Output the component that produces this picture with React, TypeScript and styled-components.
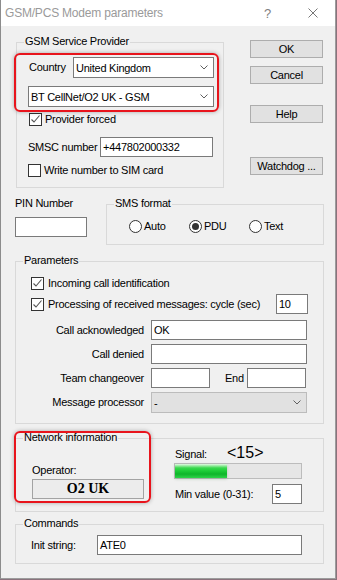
import React from 'react';
import styled, { createGlobalStyle } from 'styled-components';

const GlobalStyle = createGlobalStyle`
  * { box-sizing: border-box; }
  html, body { margin: 0; padding: 0; }
  body {
    background: #8a727c;
    font-family: "Liberation Sans", Arial, sans-serif;
    font-size: 11px;
    letter-spacing: -0.25px;
    color: #000;
  }
`;

const Window = styled.div`
  width: 336px;
  height: 579px;
  background: #f0f0f0;
  border-left: 1px solid #8c8c8c;
  border-right: 1px solid #9c9c9c;
  border-bottom: 1px solid #9c9c9c;
  display: flex;
  flex-direction: column;
`;

const TitleBar = styled.div`
  height: 26px;
  flex: none;
  background: #fff;
  display: flex;
  align-items: center;
  padding-left: 4px;
`;

const Title = styled.div`
  flex: 1;
  font-size: 12px;
  letter-spacing: -0.2px;
  color: #9a9a9a;
`;

const TitleHelp = styled.div`
  font-size: 13px;
  color: #808080;
  margin-right: 37px;
`;

const TitleClose = styled.svg`
  margin-right: 17px;
  flex: none;
`;

const Body = styled.div`
  position: relative;
  flex: 1;
  padding-left: 14px;
  display: flex;
  flex-direction: column;
  align-items: flex-start;
`;

const TopRow = styled.div`
  display: flex;
  align-items: flex-start;
  margin-top: 14px;
`;

const MidRow = styled.div`
  display: flex;
  align-items: flex-start;
  margin-top: 16px;
`;

const Group = styled.div<{ $w: number; $h: number; $ml?: number; $mt?: number; $pad: string; $dir?: string }>`
  position: relative;
  flex: none;
  width: ${p => p.$w}px;
  height: ${p => p.$h}px;
  margin-left: ${p => p.$ml ?? 0}px;
  margin-top: ${p => p.$mt ?? 0}px;
  padding: ${p => p.$pad};
  border: 1px solid #d9d9d9;
  display: flex;
  flex-direction: ${p => p.$dir ?? 'column'};
  align-items: flex-start;
`;

const Legend = styled.span`
  position: absolute;
  top: -8px;
  left: 7px;
  padding: 0 1px;
  line-height: 13px;
  background: #f0f0f0;
  white-space: nowrap;
`;

const Row = styled.div<{ $mt?: number; $ml?: number; $h?: number; $gap?: number }>`
  display: flex;
  align-items: center;
  margin-top: ${p => p.$mt ?? 0}px;
  margin-left: ${p => p.$ml ?? 0}px;
  height: ${p => (p.$h ? `${p.$h}px` : 'auto')};
  gap: ${p => p.$gap ?? 0}px;
  align-self: stretch;
`;

const Label = styled.span<{ $w?: number; $ml?: number; $right?: boolean }>`
  flex: none;
  width: ${p => (p.$w ? `${p.$w}px` : 'auto')};
  margin-left: ${p => p.$ml ?? 0}px;
  text-align: ${p => (p.$right ? 'right' : 'left')};
  line-height: 13px;
  white-space: nowrap;
`;

const TextBox = styled.div<{ $w: number; $ml?: number | 'auto'; $mt?: number }>`
  flex: none;
  width: ${p => p.$w}px;
  height: 20px;
  margin-left: ${p => (p.$ml === 'auto' ? 'auto' : `${p.$ml ?? 0}px`)};
  margin-top: ${p => p.$mt ?? 0}px;
  border: 1px solid #7a7a7a;
  background: #fff;
  padding-left: 2px;
  display: flex;
  align-items: center;
  white-space: nowrap;
`;

const Combo = styled.div<{ $w: number; $h?: number; $ml?: number; $mt?: number; $disabled?: boolean }>`
  flex: none;
  width: ${p => p.$w}px;
  height: ${p => p.$h ?? 21}px;
  margin-left: ${p => p.$ml ?? 0}px;
  margin-top: ${p => p.$mt ?? 0}px;
  border: 1px solid ${p => (p.$disabled ? '#bcbcbc' : '#7a7a7a')};
  background: ${p => (p.$disabled ? '#e1e1e1' : '#fff')};
  padding: 0 5px 0 2px;
  display: flex;
  align-items: center;
  justify-content: space-between;
  white-space: nowrap;
`;

const Chevron = () => (
  <svg width="8" height="5" viewBox="0 0 8 5">
    <path d="M0.5 0.5 L4 4 L7.5 0.5" fill="none" stroke="#606060" strokeWidth="1" />
  </svg>
);

const Box = styled.span`
  flex: none;
  width: 13px;
  height: 13px;
  border: 1px solid #333;
  background: #fff;
  display: flex;
  align-items: center;
  justify-content: center;
`;

const Check = ({ on }: { on?: boolean }) => (
  <Box>
    {on && (
      <svg width="11" height="11" viewBox="0 0 11 11">
        <polyline points="1.5,5.5 4,8 9.5,1.5" fill="none" stroke="#555" strokeWidth="1.1" />
      </svg>
    )}
  </Box>
);

const RadioItem = styled.div`
  width: 60px;
  height: 13px;
  display: flex;
  align-items: center;
  gap: 2px;
  flex: none;
`;

const RadioCircle = styled.span<{ $on?: boolean }>`
  flex: none;
  width: 13px;
  height: 13px;
  border-radius: 50%;
  border: 1px solid #333;
  background: #fff;
  display: flex;
  align-items: center;
  justify-content: center;
  &::after {
    content: '';
    display: ${p => (p.$on ? 'block' : 'none')};
    width: 7px;
    height: 7px;
    border-radius: 50%;
    background: #333;
  }
`;

const ButtonCol = styled.div`
  display: flex;
  flex-direction: column;
  margin-left: 26px;
`;

const Btn = styled.div<{ $mt?: number }>`
  width: 73px;
  height: 18px;
  margin-top: ${p => p.$mt ?? 0}px;
  background: #e1e1e1;
  border: 1px solid #adadad;
  display: flex;
  align-items: center;
  justify-content: center;
  white-space: nowrap;
`;

const Col = styled.div<{ $mt?: number; $ml?: number; $w?: number }>`
  display: flex;
  flex-direction: column;
  align-items: flex-start;
  margin-top: ${p => p.$mt ?? 0}px;
  margin-left: ${p => p.$ml ?? 0}px;
  width: ${p => (p.$w ? `${p.$w}px` : 'auto')};
  flex: none;
`;

const OperatorBox = styled.div`
  width: 112px;
  height: 20px;
  margin-top: 2px;
  border: 1px solid #a3a3a3;
  background: #ececec;
  display: flex;
  align-items: center;
  justify-content: center;
  font-family: "Liberation Serif", "Times New Roman", serif;
  font-weight: bold;
  font-size: 14px;
  letter-spacing: 0;
`;

const SignalRow = styled.div`
  display: flex;
  align-items: baseline;
`;

const SignalValue = styled.span`
  font-size: 16px;
  line-height: 18px;
  letter-spacing: 0;
`;

const Progress = styled.div`
  width: 128px;
  height: 16px;
  margin-top: 1px;
  border: 1px solid #bcbcbc;
  background: #e6e6e6;
  display: flex;
`;

const ProgressFill = styled.div`
  height: 100%;
  background: linear-gradient(
    to bottom,
    #e4fae4 0%,
    #9cecA4 12%,
    #3ad84e 28%,
    #1ccc36 50%,
    #0fb52a 72%,
    #2ed448 100%
  );
  box-shadow: 0 1px 3px rgba(0, 90, 0, 0.2);
`;

const Highlight = styled.div<{ $l: number; $t: number; $w: number; $h: number }>`
  position: absolute;
  left: ${p => p.$l}px;
  top: ${p => p.$t}px;
  width: ${p => p.$w}px;
  height: ${p => p.$h}px;
  border: 2px solid #e8141c;
  border-radius: 6px;
  box-shadow: 0 0 4px rgba(0, 0, 0, 0.3);
  pointer-events: none;
`;

export default function App() {
  const signalPct = (52 / 126) * 100;
  return (
    <>
      <GlobalStyle />
      <Window>
        <TitleBar>
          <Title>GSM/PCS Modem parameters</Title>
          <TitleHelp>?</TitleHelp>
          <TitleClose width="10" height="10" viewBox="0 0 10 10">
            <path d="M0.5 0.5 L9.5 9.5 M9.5 0.5 L0.5 9.5" stroke="#777" strokeWidth="1" />
          </TitleClose>
        </TitleBar>
        <Body>
          <TopRow>
            <Group $w={208} $h={146} $ml={1} $mt={2} $pad="14px 0 0 11px">
              <Legend>GSM Service Provider</Legend>
              <Row $h={21}>
                <Label $w={44} $ml={1}>Country</Label>
                <Combo $w={141}>
                  <span>United Kingdom</span>
                  <Chevron />
                </Combo>
              </Row>
              <Combo $w={186} $mt={8}>
                <span>BT CellNet/O2 UK - GSM</span>
                <Chevron />
              </Combo>
              <Row $mt={6} $ml={1} $h={13} $gap={3}>
                <Check on />
                <Label>Provider forced</Label>
              </Row>
              <Row $mt={11} $h={20}>
                <Label $w={72} $ml={0}>SMSC number</Label>
                <TextBox $w={113}>+447802000332</TextBox>
              </Row>
              <Row $mt={7} $h={13} $gap={3}>
                <Check />
                <Label>Write number to SIM card</Label>
              </Row>
            </Group>
            <ButtonCol>
              <Btn>OK</Btn>
              <Btn $mt={8}>Cancel</Btn>
              <Btn $mt={21}>Help</Btn>
              <Btn $mt={34}>Watchdog ...</Btn>
            </ButtonCol>
          </TopRow>

          <MidRow>
            <Col $mt={-7} $w={72}>
              <Label>PIN Number</Label>
              <TextBox $w={72} $mt={7} />
            </Col>
            <Group $w={218} $h={41} $ml={19} $pad="15px 0 0 22px" $dir="row">
              <Legend>SMS format</Legend>
              <RadioItem>
                <RadioCircle />
                <Label>Auto</Label>
              </RadioItem>
              <RadioItem>
                <RadioCircle $on />
                <Label>PDU</Label>
              </RadioItem>
              <RadioItem>
                <RadioCircle />
                <Label>Text</Label>
              </RadioItem>
            </Group>
          </MidRow>

          <Group $w={309} $h={163} $mt={16} $pad="15px 15px 0 15px">
            <Legend>Parameters</Legend>
            <Row $h={13} $gap={4}>
              <Check on />
              <Label>Incoming call identification</Label>
            </Row>
            <Row $mt={4} $h={20} $gap={4}>
              <Check on />
              <Label>Processing of received messages: cycle (sec)</Label>
              <TextBox $w={32} $ml="auto">10</TextBox>
            </Row>
            <Row $mt={6} $h={20}>
              <Label $w={113} $right>Call acknowledged</Label>
              <TextBox $w={156} $ml={7}>OK</TextBox>
            </Row>
            <Row $mt={4} $h={20}>
              <Label $w={113} $right>Call denied</Label>
              <TextBox $w={156} $ml={7} />
            </Row>
            <Row $mt={4} $h={20}>
              <Label $w={113} $right>Team changeover</Label>
              <TextBox $w={59} $ml={7} />
              <Label $w={19} $ml={15}>End</Label>
              <TextBox $w={59} $ml={3} />
            </Row>
            <Row $mt={4} $h={21}>
              <Label $w={113} $right>Message processor</Label>
              <Combo $w={156} $ml={7} $disabled>
                <span>-</span>
                <Chevron />
              </Combo>
            </Row>
          </Group>

          <Group $w={309} $h={74} $mt={14} $pad="0 0 0 16px" $dir="row">
            <Legend>Network information</Legend>
            <Col $mt={25} $w={112}>
              <Label>Operator:</Label>
              <OperatorBox>O2 UK</OperatorBox>
            </Col>
            <Col $mt={5} $ml={30}>
              <SignalRow>
                <Label $w={52} $ml={1}>Signal:</Label>
                <SignalValue>&lt;15&gt;</SignalValue>
              </SignalRow>
              <Progress>
                <ProgressFill style={{ width: `${signalPct}%` }} />
              </Progress>
              <Row $mt={5} $h={20}>
                <Label $w={97} $ml={1}>Min value (0-31):</Label>
                <TextBox $w={30}>5</TextBox>
              </Row>
            </Col>
          </Group>

          <Group $w={309} $h={40} $mt={12} $pad="10px 0 0 15px">
            <Legend>Commands</Legend>
            <Row $h={20}>
              <Label $w={66}>Init string:</Label>
              <TextBox $w={205}>ATE0</TextBox>
            </Row>
          </Group>

          <Highlight $l={13} $t={27} $w={205} $h={59} />
          <Highlight $l={13} $t={405} $w={137} $h={72} />
        </Body>
      </Window>
    </>
  );
}
